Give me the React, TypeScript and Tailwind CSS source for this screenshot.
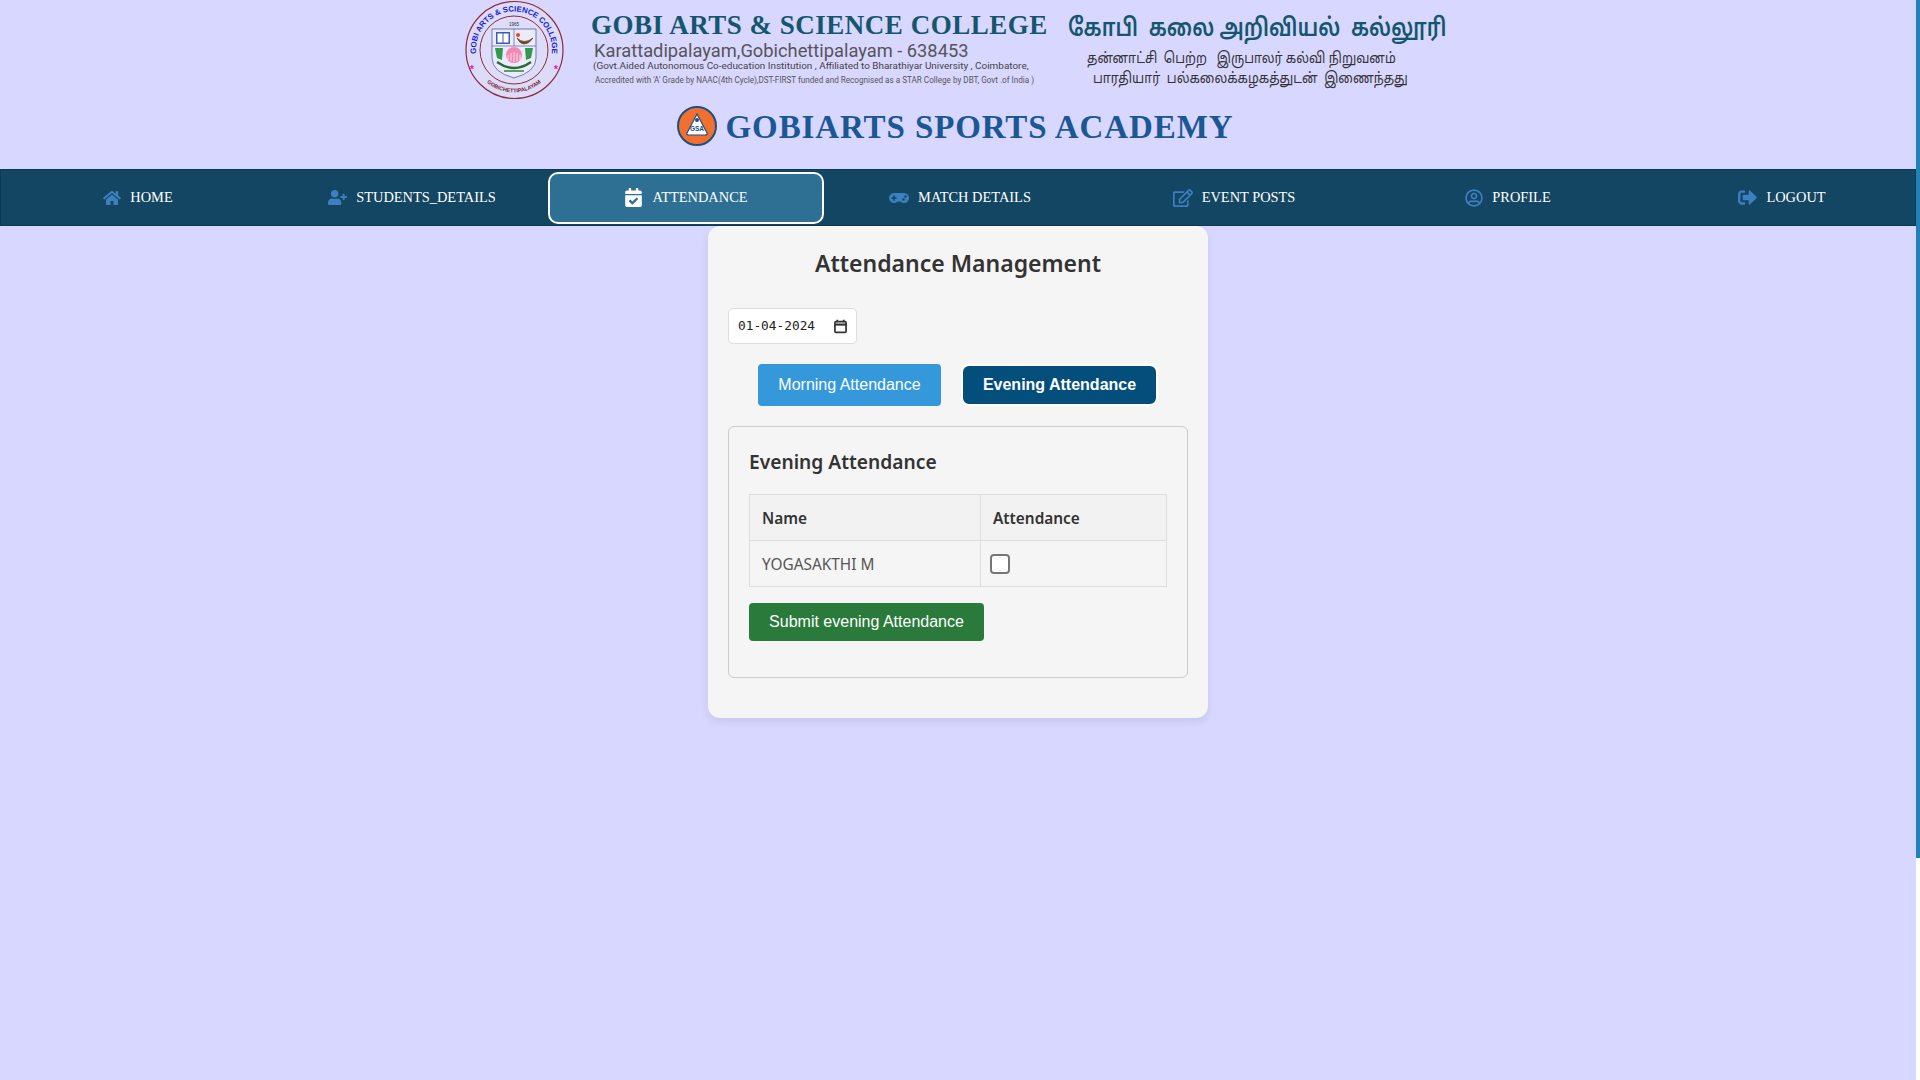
import { FaHome, FaUserPlus, FaCalendarCheck, FaGamepad, FaRegEdit, FaRegUserCircle, FaSignOutAlt } from "react-icons/fa";

const navItems = [
  { label: "HOME", icon: FaHome, size: "text-[18px]" },
  { label: "STUDENTS_DETAILS", icon: FaUserPlus, size: "text-[19px]" },
  { label: "ATTENDANCE", icon: FaCalendarCheck, size: "text-[19px]", active: true },
  { label: "MATCH DETAILS", icon: FaGamepad, size: "text-[20px]" },
  { label: "EVENT POSTS", icon: FaRegEdit, size: "text-[20px]" },
  { label: "PROFILE", icon: FaRegUserCircle, size: "text-[18px]" },
  { label: "LOGOUT", icon: FaSignOutAlt, size: "text-[19px]" },
];

function CollegeSeal() {
  return (
    <svg width="100" height="100" viewBox="0 0 100 100" className="shrink-0">
      <defs>
        <path id="sealTop" d="M 13.5 60 A 38 38 0 1 1 86.5 60" fill="none" />
        <path id="sealBottom" d="M 14 72 A 42 42 0 0 0 86 72" fill="none" />
      </defs>
      <circle cx="50.5" cy="50" r="48.5" fill="#dcdcf8" stroke="#8c2a3a" strokeWidth="1.2" />
      <circle cx="50" cy="50" r="34" fill="#dedcf8" stroke="#8c2a3a" strokeWidth="1" />
      <text fontSize="7.8" fontWeight="700" fill="#1a1ae0" fontFamily="'Liberation Sans', sans-serif">
        <textPath href="#sealTop" startOffset="50%" textAnchor="middle">GOBI ARTS &amp; SCIENCE COLLEGE</textPath>
      </text>
      <text fontSize="5.4" fontWeight="700" fill="#7a2030" fontFamily="'Liberation Sans', sans-serif">
        <textPath href="#sealBottom" startOffset="50%" textAnchor="middle">GOBICHETTIPALAYAM</textPath>
      </text>
      <text x="8" y="73" fontSize="11" fontWeight="700" fill="#e020c0" textAnchor="middle" fontFamily="'Liberation Sans', sans-serif">*</text>
      <text x="92" y="73" fontSize="11" fontWeight="700" fill="#e020c0" textAnchor="middle" fontFamily="'Liberation Sans', sans-serif">*</text>
      <text x="50" y="26" fontSize="4.6" fill="#333" textAnchor="middle" fontFamily="'Liberation Sans', sans-serif">1965</text>
      <path d="M28 29 H72 V58 Q72 72 50 78 Q28 72 28 58 Z" fill="#ecebfb" stroke="#3b4a9a" strokeWidth="0.7" />
      <path d="M50 29 V46 M28 46 H72" stroke="#3b4a9a" strokeWidth="0.6" />
      <rect x="32" y="32" width="14" height="12" fill="#3a5fb0" />
      <rect x="33.5" y="33.5" width="5" height="9" fill="#fff" />
      <rect x="39.5" y="33.5" width="5" height="9" fill="#fff" />
      <circle cx="54" cy="35" r="2" fill="#e8431f" />
      <path d="M53 38 Q60 45 69 38 Q65 44 60 44 Q56 44 53 38 Z" fill="#6b4a20" stroke="#6b4a20" strokeWidth="0.8" />
      <path d="M31 48 L39 48 L38 60 L33 58 Z M61 48 L69 48 L67 58 L62 60 Z" fill="#2f9a4a" />
      <circle cx="50" cy="55" r="8" fill="#f08ab4" />
      <path d="M44 55 V60 M47 53 V61 M50 52 V62 M53 53 V61 M56 55 V60" stroke="#fff" strokeWidth="0.7" />
      <path d="M33 62 Q50 74 67 62" fill="none" stroke="#2a6a3a" strokeWidth="2.4" />
      <path d="M40 71 H60" stroke="#3a8a4a" strokeWidth="1.6" />
    </svg>
  );
}

function SportsLogo() {
  return (
    <svg width="40" height="40" viewBox="0 0 40 40" className="shrink-0">
      <circle cx="20" cy="20" r="19" fill="#f2702f" stroke="#1d4f80" strokeWidth="2" />
      <path d="M20 8 L30 27 Q31 29 28 29 H12 Q9 29 10 27 Z" fill="#fff" stroke="#1d4f80" strokeWidth="1.2" />
      <circle cx="20" cy="14" r="2" fill="#1d4f80" />
      <text x="20" y="25" fontSize="6.5" fontWeight="700" fill="#1d4f80" textAnchor="middle" fontFamily="'Liberation Sans', sans-serif">GSA</text>
    </svg>
  );
}

export default function App() {
  return (
    <div className="flex h-screen overflow-hidden bg-white">
      <div className="min-w-0 flex-1 bg-[#d8d7ff]">
        <header className="h-[169px]">
          <div className="flex justify-center">
            <CollegeSeal />
            <div className="ml-[27px] w-[477px] pt-[11px] font-['Roboto',sans-serif]">
              <div className="font-['Liberation_Serif',serif] text-[27px] leading-[28px] font-bold tracking-[0.5px] whitespace-nowrap text-[#14566e]">
                GOBI ARTS &amp; SCIENCE COLLEGE
              </div>
              <div className="mt-[3px] ml-[3px] text-[18.3px] leading-[18px] whitespace-nowrap text-[#555]">
                Karattadipalayam,Gobichettipalayam - 638453
              </div>
              <div className="ml-[2px] text-[9.95px] leading-[12px] whitespace-nowrap text-[#444]">
                (Govt.Aided Autonomous Co-education Institution , Affiliated to Bharathiyar University , Coimbatore,
              </div>
              <div className="mt-[2px] ml-[4px] text-[8.15px] leading-[12px] whitespace-nowrap text-[#555]">
                Accredited with 'A' Grade by NAAC(4th Cycle),DST-FIRST funded and Recognised as a STAR College by DBT, Govt .of India )
              </div>
            </div>
            <div className="w-[384px] pt-[15px] font-['Noto_Sans_Tamil','Noto_Sans','Lato',sans-serif]">
              <div className="origin-left scale-x-[0.82] text-[25px] leading-[30px] font-semibold whitespace-pre text-[#14566e]">
                கோபி  கலை அறிவியல்  கல்லூரி
              </div>
              <div className="mt-[5px] ml-[19px] origin-left scale-x-[0.84] text-[15px] leading-[20px] whitespace-pre text-[#333]">
                தன்னாட்சி  பெற்ற   இருபாலர் கல்வி நிறுவனம்
              </div>
              <div className="ml-[25px] origin-left scale-x-[0.84] text-[15px] leading-[20px] whitespace-pre text-[#333]">
                பாரதியார்  பல்கலைக்கழகத்துடன்  இணைந்தது
              </div>
            </div>
          </div>
          <div className="mt-[5px] flex items-center justify-center pr-[6px]">
            <SportsLogo />
            <div className="ml-[9px] pt-[2px] font-['Liberation_Serif',serif] text-[33px] leading-[40px] font-bold tracking-[0.9px] whitespace-nowrap text-[#1b5795]">
              GOBIARTS SPORTS ACADEMY
            </div>
          </div>
        </header>

        <nav className="grid h-[57px] grid-cols-[repeat(7,274px)] items-center overflow-hidden border border-[#0b3a52] bg-[#134662] font-['Liberation_Serif',serif] text-[14.4px] text-white">
          {navItems.map((item) => {
            const Icon = item.icon;
            return (
              <a
                key={item.label}
                className={
                  item.active
                    ? "-mx-[1px] flex h-[52px] items-center justify-center gap-[9px] rounded-[10px] border-2 border-white bg-[#2e6f94]"
                    : "flex h-[52px] items-center justify-center gap-[9px]"
                }
              >
                <Icon className={`${item.size} ${item.active ? "text-white" : "text-[#3d7fbf]"}`} />
                <span>{item.label}</span>
              </a>
            );
          })}
        </nav>

        <main className="mx-auto w-[500px] rounded-[12px] bg-[#f5f5f5] px-[20px] pt-[21px] pb-[20px] font-['Noto_Sans',sans-serif] shadow-[0_4px_8px_rgba(0,0,0,0.08)]">
          <h2 className="text-center text-[23px] leading-[33px] font-semibold text-[#333]">Attendance Management</h2>

          <div className="mt-[28px] flex h-[36px] w-[129px] items-center justify-between rounded-[5px] border border-[#ddd] bg-white pr-[8px] pl-[9px]">
            <span className="font-['DejaVu_Sans_Mono',monospace] text-[12.8px] text-[#222]">01-04-2024</span>
            <svg width="15" height="15" viewBox="0 0 14 14" fill="none" stroke="#333" strokeWidth="1.6">
              <rect x="1.8" y="2.5" width="10.4" height="10" rx="1" />
              <path d="M1.8 5.2 H12.2" strokeWidth="2" />
              <path d="M4 0.8 V3 M10 0.8 V3" />
            </svg>
          </div>

          <div className="mt-[20px] flex justify-center gap-[20px] font-['Liberation_Sans',sans-serif] text-[16px]">
            <button className="h-[42px] w-[183px] rounded-[4px] bg-[#3498db] text-white">Morning Attendance</button>
            <button className="h-[42px] w-[197px] rounded-[8px] border-2 border-white bg-[#044e7c] font-bold text-white">
              Evening Attendance
            </button>
          </div>

          <section className="mt-[20px] mb-[20px] h-[252px] rounded-[6px] border border-[#ccc] px-[20px] pt-[20px]">
            <h3 className="text-[19.2px] leading-[30px] font-semibold text-[#333]">Evening Attendance</h3>
            <table className="mt-[17px] w-[418px] border-collapse text-left text-[15.4px]">
              <thead>
                <tr className="h-[46px] bg-[#f2f2f2] text-[#333]">
                  <th className="w-[231px] border border-[#ddd] px-[12px] pt-[2px] font-semibold">Name</th>
                  <th className="border border-[#ddd] px-[12px] pt-[2px] font-semibold">Attendance</th>
                </tr>
              </thead>
              <tbody>
                <tr className="h-[46px]">
                  <td className="border border-[#ddd] px-[12px] pt-[2px] text-[#555]">YOGASAKTHI M</td>
                  <td className="border border-[#ddd] px-[9px]">
                    <div className="h-[20px] w-[20px] rounded-[4px] border-2 border-[#767676] bg-white" />
                  </td>
                </tr>
              </tbody>
            </table>
            <button className="mt-[16px] h-[38px] w-[235px] rounded-[4px] bg-[#2a7a3b] font-['Liberation_Sans',sans-serif] text-[16px] text-white">
              Submit evening Attendance
            </button>
          </section>
        </main>
      </div>
      <div className="w-[4px] shrink-0">
        <div className="h-[858px] bg-[#2481b8]" />
      </div>
    </div>
  );
}
